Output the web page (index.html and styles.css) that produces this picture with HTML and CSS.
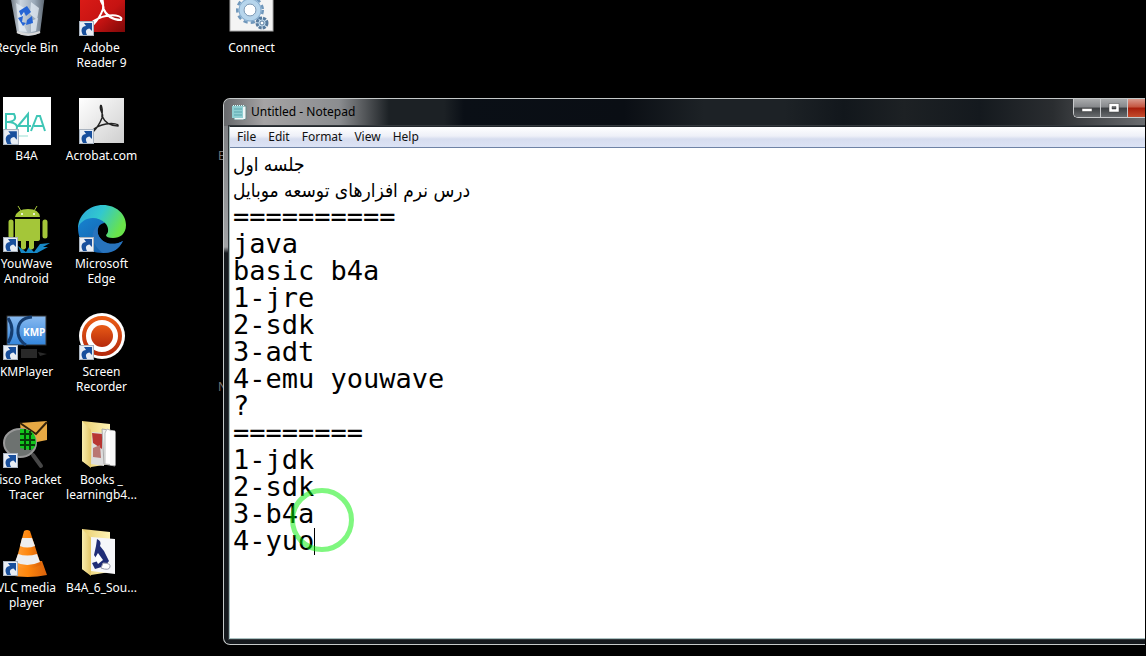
FILE: index.html
```html
<!DOCTYPE html>
<html lang="en">
<head>
  <meta charset="UTF-8" />
  <meta name="viewport" content="width=device-width, initial-scale=1.0"/>
  <title>Desktop</title>
  <link rel="stylesheet" href="styles.css">
</head>
<body>
  <!-- shared shortcut arrow -->
  <svg class="defs" aria-hidden="true">
    <symbol id="shortcut" viewBox="0 0 15 15">
      <rect x=".5" y=".5" width="14" height="14" fill="#e8edf4" stroke="#a9b3bf"/>
      <path d="M4 14C1 9 3 5 7 5L5 2H13V10L10.500 7.500C7 8 6 10 8 14Z" fill="#184f9c"/>
    </symbol>
    <linearGradient id="folderBack" x1="0" x2="1"><stop stop-color="#e9ce70"/><stop offset="1" stop-color="#fff4b5"/></linearGradient>
    <linearGradient id="folderFront" x1="0" x2="1"><stop stop-color="#f9edae"/><stop offset="1" stop-color="#e3c667"/></linearGradient>
  </svg>

  <main class="desktop">
    <a class="item first" href="#">
      <svg class="icon" viewBox="0 0 48 48">
        <defs><linearGradient id="bin" x1="0" x2="1"><stop stop-color="#68717b"/><stop offset=".3" stop-color="#cbd5df"/><stop offset=".7" stop-color="#9aa9b8"/><stop offset="1" stop-color="#5b6570"/></linearGradient></defs>
        <path d="M7 5H42L37 44Q25 50 14 44Z" fill="url(#bin)"/>
        <path d="M13 14L23 20 18 30 24 43 16 42ZM28 13L36 19 34 31 27 25ZM28 32L35 29 33 42 28 43Z" fill="#e5edf5" opacity=".75"/>
        <path d="M16 22L24 17 28 23 23 27 21 23 18 27ZM15 29L20 27 19 33 23 34 20 37ZM29 27L30 34 23 36 24 31Z" fill="#2565d5"/>
        <path d="M14 43Q25 48 37 43" fill="none" stroke="#d9d9d9" stroke-width="2"/>
      </svg>
      <span>Recycle Bin</span>
    </a>
    <a class="item" href="#">
      <svg class="icon" viewBox="0 0 48 48">
        <defs><linearGradient id="pdf" x1="0" x2="1" y2="1"><stop stop-color="#df1d18"/><stop offset=".6" stop-color="#c51312"/><stop offset="1" stop-color="#7d0808"/></linearGradient></defs>
        <rect x="2" y="1" width="45" height="42" fill="url(#pdf)"/>
        <path d="M23 7C20 12 28 17 25 20C23 26 19 32 14 37M25 19C28 26 34 31 43 31C45 28 39 25 28 27C22 28 17 31 13 34M23 7C26 12 25 17 25 20" fill="none" stroke="#fff" stroke-width="2"/>
        <use href="#shortcut" x="1" y="32" width="15" height="15"/>
      </svg>
      <span>Adobe<br>Reader 9</span>
    </a>
    <a class="item far" href="#">
      <svg class="icon" viewBox="0 0 48 48">
        <rect x="2" y="0" width="43" height="42" fill="#f4f4f4" stroke="#aaa"/>
        <circle cx="22" cy="21" r="12" fill="none" stroke="#7097bb" stroke-width="4" stroke-dasharray="4 3"/>
        <circle cx="22" cy="21" r="9" fill="none" stroke="#b6d5ec" stroke-width="5"/>
        <circle cx="22" cy="21" r="11" fill="none" stroke="#86abcc"/>
        <circle cx="22" cy="21" r="6" fill="#fff" stroke="#6a8eb0"/>
        <circle cx="34" cy="34" r="5" fill="#c6deef" stroke="#587b9e" stroke-width="3" stroke-dasharray="3 1"/>
        <circle cx="34" cy="34" r="2" fill="#fff" stroke="#587b9e"/>
      </svg>
      <span>Connect</span>
    </a>

    <a class="item first" href="#">
      <svg class="icon" viewBox="0 0 48 48">
        <rect x="0" y="0" width="48" height="48" fill="#fff"/>
        <g fill="none" stroke="#3fc6b6" stroke-width="2"><path d="M3 17H11Q15 24 5 25H3ZM5 25Q17 26 13 34H3V17M25 35V17L15 29H28M28 34L34 19H37L42 34M31 29H41"/><path d="M4 39H25" stroke="#ccefe9"/></g>
        <use href="#shortcut" x="0" y="32" width="16" height="16"/>
      </svg>
      <span>B4A</span>
    </a>
    <a class="item" href="#">
      <svg class="icon" viewBox="0 0 48 48">
        <defs><linearGradient id="acro" x1="0" x2="1" y2="1"><stop stop-color="#fff"/><stop offset="1" stop-color="#cfcfcf"/></linearGradient></defs>
        <rect x="1" y="1" width="45" height="45" fill="url(#acro)"/>
        <path d="M23 8C20 13 27 17 24 21C22 26 19 31 15 35M24 19C27 26 32 29 40 29C41 27 35 26 28 27C23 28 18 30 15 33M23 8C25 12 24 16 24 20" fill="none" stroke="#222" stroke-width="1.500"/>
        <use href="#shortcut" x="1" y="32" width="15" height="15"/>
      </svg>
      <span>Acrobat.com</span>
    </a>
    <a class="item far covered" href="#"><span>E</span></a>

    <a class="item first" href="#">
      <svg class="icon" viewBox="0 0 48 48">
        <path d="M15 41L23 47 26 42 31 47 37 39 47 38 40 42H45L34 48H18Z" fill="#1789c8"/>
        <path d="M12 12Q14 4 25 4T37 12ZM12 14H37V34Q37 36 34 36H31V43Q28 46 26 43V36H23V43Q20 46 18 43V36H15Q12 36 12 34Z" fill="#a4c639"/>
        <path d="M8 17V31M42 17V31" stroke="#a4c639" stroke-width="5" stroke-linecap="round"/>
        <path d="M18 6L15 1M31 6L34 1" stroke="#a4c639"/>
        <circle cx="19" cy="9" r="1" fill="#fff"/><circle cx="31" cy="9" r="1" fill="#fff"/>
        <use href="#shortcut" x="0" y="32" width="15" height="15"/>
      </svg>
      <span>YouWave<br>Android</span>
    </a>
    <a class="item" href="#">
      <svg class="icon" viewBox="0 0 48 48">
        <defs>
          <linearGradient id="edgeTop" x1="0" x2="1" y2=".4"><stop stop-color="#2aa5dc"/><stop offset=".5" stop-color="#32c8cf"/><stop offset="1" stop-color="#69e34a"/></linearGradient>
          <linearGradient id="edgeLow" x1="0" x2="1" y2="1"><stop stop-color="#1683d0"/><stop offset="1" stop-color="#15549f"/></linearGradient>
        </defs>
        <path d="M0 24C0 10 11 0 25 0C38 0 48 9 48 20C48 29 42 33 35 33Q28 33 28 30C31 28 31 22 27 18C19 12 5 14 0 24Z" fill="url(#edgeTop)"/>
        <path d="M0 23C3 13 18 9 27 18C22 18 18 23 20 29C23 38 34 42 45 36C40 45 33 48 24 48C10 48 0 37 0 23Z" fill="url(#edgeLow)"/>
        <path d="M18 22C11 30 16 42 25 48C36 48 41 44 45 36C34 42 23 38 20 29Q19 25 21 20Z" fill="#2873bd"/>
        <use href="#shortcut" x="1" y="32" width="15" height="15"/>
      </svg>
      <span>Microsoft<br>Edge</span>
    </a>

    <a class="item first" href="#">
      <svg class="icon" viewBox="0 0 48 48">
        <defs><linearGradient id="kmp" x1="0" x2="0" y2="1"><stop stop-color="#88baf0"/><stop offset="1" stop-color="#3385dc"/></linearGradient></defs>
        <rect x="4" y="3" width="39" height="29" fill="url(#kmp)" stroke="#333"/>
        <path d="M5 5Q13 17 5 30M29 4Q14 5 15 20Q16 28 23 32" fill="none" stroke="#153d70" stroke-width="3"/>
        <text x="20" y="23" class="kmp-text">KMP</text>
        <path d="M18 36H34V45H18ZM35 39L44 41 37 43Z" fill="#292929"/>
        <use href="#shortcut" x="0" y="32" width="15" height="15"/>
      </svg>
      <span>KMPlayer</span>
    </a>
    <a class="item" href="#">
      <svg class="icon" viewBox="0 0 48 48">
        <defs><linearGradient id="rec" x1="0" x2="0" y2="1"><stop stop-color="#e95b16"/><stop offset="1" stop-color="#b52a0c"/></linearGradient></defs>
        <circle cx="24" cy="23" r="23" fill="#fff"/>
        <circle cx="24" cy="23" r="18" fill="none" stroke="url(#rec)" stroke-width="4"/>
        <circle cx="24" cy="23" r="11" fill="url(#rec)"/>
        <use href="#shortcut" x="1" y="32" width="15" height="15"/>
      </svg>
      <span>Screen<br>Recorder</span>
    </a>
    <a class="item far covered low" href="#"><span>N</span></a>

    <a class="item first" href="#">
      <svg class="icon" viewBox="0 0 48 48">
        <path d="M17 2L44 0V19L19 24Z" fill="#e7a944"/>
        <path d="M17 2L33 13 44 1" fill="none" stroke="#32200a" stroke-width="2"/>
        <path d="M30 34L38 45" stroke="#474747" stroke-width="4" stroke-linecap="round"/>
        <ellipse cx="17" cy="22" rx="16" ry="14" fill="#6d7270" stroke="#999" stroke-width="2"/>
        <path d="M17 8Q33 7 33 22Q32 28 27 29L17 27Z" fill="#13c51e"/>
        <path d="M17 13H29M17 19H32M17 24H32M22 8V29M27 10V29" stroke="#063d09" stroke-width="2"/>
        <use href="#shortcut" x="0" y="32" width="15" height="15"/>
      </svg>
      <span>Cisco Packet<br>Tracer</span>
    </a>
    <a class="item" href="#">
      <svg class="icon" viewBox="0 0 48 48">
        <path d="M4 0L32 3V43L13 46 4 40Z" fill="url(#folderBack)"/>
        <path d="M14 11L26 12V45L13 43Z" fill="#ddd"/><path d="M14 12L24 13V28L15 22Z" fill="#b83632"/><path d="M15 27L22 24 23 37 15 36Z" fill="#b97773"/>
        <path d="M24 8L37 10V45L26 43Z" fill="#eee" stroke="#aaa"/><path d="M29 8L37 11V44L27 43V12Z" fill="#fff" stroke="#bbb"/>
        <path d="M32 10H37V44H32Z" fill="#f7f7f7"/>
        <path d="M4 0L13 9V47L4 40Z" fill="url(#folderFront)"/>
      </svg>
      <span>Books _<br>learningb4...</span>
    </a>

    <a class="item first" href="#">
      <svg class="icon" viewBox="0 0 48 48">
        <defs><linearGradient id="cone" x1="0" x2="1"><stop stop-color="#ffa23d"/><stop offset=".5" stop-color="#ff870d"/><stop offset="1" stop-color="#d9610a"/></linearGradient></defs>
        <path d="M9 32H39L44 46Q25 50 5 46Z" fill="url(#cone)"/>
        <path d="M21 2Q24 0 27 2L38 36Q25 43 12 36Z" fill="url(#cone)"/>
        <path d="M19 9H29L32 17Q24 20 17 17ZM15 25Q24 28 34 25L37 33Q24 39 12 33Z" fill="#eee"/>
        <use href="#shortcut" x="0" y="32" width="15" height="15"/>
      </svg>
      <span>VLC media<br>player</span>
    </a>
    <a class="item" href="#">
      <svg class="icon" viewBox="0 0 48 48">
        <path d="M4 0L32 3V43L13 46 4 40Z" fill="url(#folderBack)"/>
        <path d="M13 8L37 10V45L13 42Z" fill="#f6f7fa"/>
        <path d="M19 10Q24 12 22 17L26 22 31 32 27 37 17 40 14 34 20 32 16 26 18 17Z" fill="#202d77"/><path d="M20 24L25 31 20 35 17 29Z" fill="#fff"/><path d="M25 34Q33 34 32 38T23 39Z" fill="#fff" stroke="#99a"/>
        <path d="M4 0L13 9V47L4 40Z" fill="url(#folderFront)"/>
      </svg>
      <span>B4A_6_Sou...</span>
    </a>
  </main>

  <section class="window">
    <header class="titlebar">
      <svg class="app-icon" viewBox="0 0 16 16">
        <path d="M3 2H15V15L12 16H3Z" fill="#eef7f7" stroke="#688"/>
        <rect x="1" y="2" width="11" height="12" fill="#8fd0d3"/>
        <path d="M3 5H11M3 8H11M3 11H11" stroke="#5aa5ad"/><path d="M2 1.500H13" stroke="#dff" stroke-dasharray="1 1"/>
      </svg>
      <h1>Untitled - Notepad</h1>
      <div class="controls">
        <button type="button" aria-label="Minimize"><svg viewBox="0 0 12 10"><path d="M1 5.500H11V8.500H1Z" fill="#fff" stroke="#444" stroke-width=".5"/></svg></button>
        <button type="button" aria-label="Maximize"><svg viewBox="0 0 12 10"><path d="M1 .5H11V9H1ZM4 3.500V6H8V3.500Z" fill="#fff" fill-rule="evenodd" stroke="#444" stroke-width=".5"/></svg></button>
        <button type="button" class="close" aria-label="Close"></button>
      </div>
    </header>
    <div class="client">
      <nav class="menu">
        <button type="button">File</button>
        <button type="button">Edit</button>
        <button type="button">Format</button>
        <button type="button">View</button>
        <button type="button">Help</button>
      </nav>
      <textarea class="heading" lang="fa" rows="2" aria-label="Heading" spellcheck="false" wrap="off">جلسه اول
درس نرم افزارهای توسعه موبایل</textarea>
      <textarea class="editor" aria-label="Text" spellcheck="false" wrap="off">==========
java
basic b4a
1-jre
2-sdk
3-adt
4-emu youwave
?
========
1-jdk
2-sdk
3-b4a
4-yuo</textarea>
      <span class="caret"></span>
      <span class="pointer-ring"></span>
    </div>
  </section>
</body>
</html>
```
FILE: styles.css
```css
* {
  box-sizing: border-box;
}

body {
  margin: 0;
  height: 100vh;
  overflow: hidden;
  background: #000;
  font-family: "Noto Sans", "Open Sans", sans-serif;
  font-size: 12px;
}

.defs {
  position: absolute;
  width: 0;
  height: 0;
}

.desktop {
  display: grid;
  grid-template-columns: repeat(4, 75px);
  grid-auto-rows: 108px;
  margin: -11px 0 0 -11px;
}

.item {
  display: flex;
  flex-direction: column;
  align-items: center;
  gap: 3px;
  min-width: 0;
  color: #fff;
  line-height: 15px;
  text-align: center;
  text-decoration: none;
  white-space: nowrap;
}

.first {
  grid-column: 1;
}

.far {
  grid-column: 4;
}

.icon {
  width: 48px;
  height: 48px;
  flex: none;
}

/* labels that are mostly behind the window */
.covered {
  align-items: flex-start;
  padding: 51px 0 0 4px;
  color: #777;
}

.low {
  padding-top: 66px;
}

.kmp-text {
  font: bold 10px "Open Sans", sans-serif;
  fill: #fff;
}

/* Notepad window */
.window {
  position: absolute;
  top: 98px;
  right: 1px;
  bottom: 11px;
  left: 223px;
  display: flex;
  flex-direction: column;
  padding: 0 0 5px 5px;
  border: 1px solid #c4c8c8;
  border-right: none;
  border-radius: 7px 0 0 7px;
  background: linear-gradient(#77797c, #a0a2a4 148px, #15191d 154px, #15191d);
  overflow: hidden;
}

.titlebar {
  display: flex;
  align-items: center;
  height: 27px;
  margin-left: -5px;
  padding: 0 0 2px 7px;
  background: linear-gradient(to right, #66686b, #a5a3a4 40px, #8b8d90 115px, #55585b 140px, #1c2125 165px, #1c2125 220px, #0a0f16 240px, #0a0e14 400px, #1d2226 480px, #1d2226 560px, #12171c 620px, #1d2124 680px, #14191e 82%, #2a2d30 90%, #6b6d70);
}

.app-icon {
  width: 16px;
  height: 16px;
}

.titlebar h1 {
  margin: 0 auto 0 4px;
  font-size: 12px;
  font-weight: 400;
}

.controls {
  display: flex;
  align-self: flex-start;
  height: 19px;
  border: 1px solid #c8cacc;
  border-width: 0 0 1px 1px;
  border-radius: 0 0 0 5px;
  overflow: hidden;
}

.controls button {
  display: grid;
  place-items: center;
  width: 27px;
  padding: 0;
  border: none;
  border-right: 1px solid #c8cacc;
  background: linear-gradient(#a9abad, #85878a 45%, #3c3f42 50%, #686b6e);
}

.controls svg {
  width: 12px;
  height: 10px;
}

.controls .close {
  width: 17px;
  border: none;
  background: linear-gradient(#d99a8d, #c4543f 45%, #a81e0b 50%, #c44b2c);
}

.client {
  position: relative;
  flex: 1;
  display: flex;
  flex-direction: column;
  border: 1px solid #a9c0c0;
  border-top-color: #23282d;
  border-right: none;
  background: #fff;
  box-shadow: 0 0 0 1px #33383c;
}

.menu {
  display: flex;
  height: 21px;
  padding-left: 1px;
  border-bottom: 1px solid #6f83a5;
  background: linear-gradient(#fff, #eef0f8 45%, #d7ddef 60%, #dce3f5);
}

.menu button {
  padding: 0 6px 2px;
  border: none;
  background: none;
  color: #111;
  font: inherit;
}

textarea {
  width: 100%;
  margin: 0;
  border: none;
  outline: none;
  resize: none;
  overflow: hidden;
  background: #fff;
  color: #000;
}

.heading {
  flex: none;
  height: 55px;
  padding: 3px 3px 0;
  font: 19px/26px "DejaVu Sans Condensed", sans-serif;
}

.editor {
  flex: 1;
  padding: 0 3px;
  font: 27px/27px "DejaVu Sans Mono", monospace;
}

.caret {
  position: absolute;
  top: 401px;
  left: 84px;
  width: 1px;
  height: 27px;
  background: #000;
}

.pointer-ring {
  position: absolute;
  top: 361px;
  left: 60px;
  width: 64px;
  height: 64px;
  border: 5px solid #00f00080;
  border-radius: 50%;
}
```
